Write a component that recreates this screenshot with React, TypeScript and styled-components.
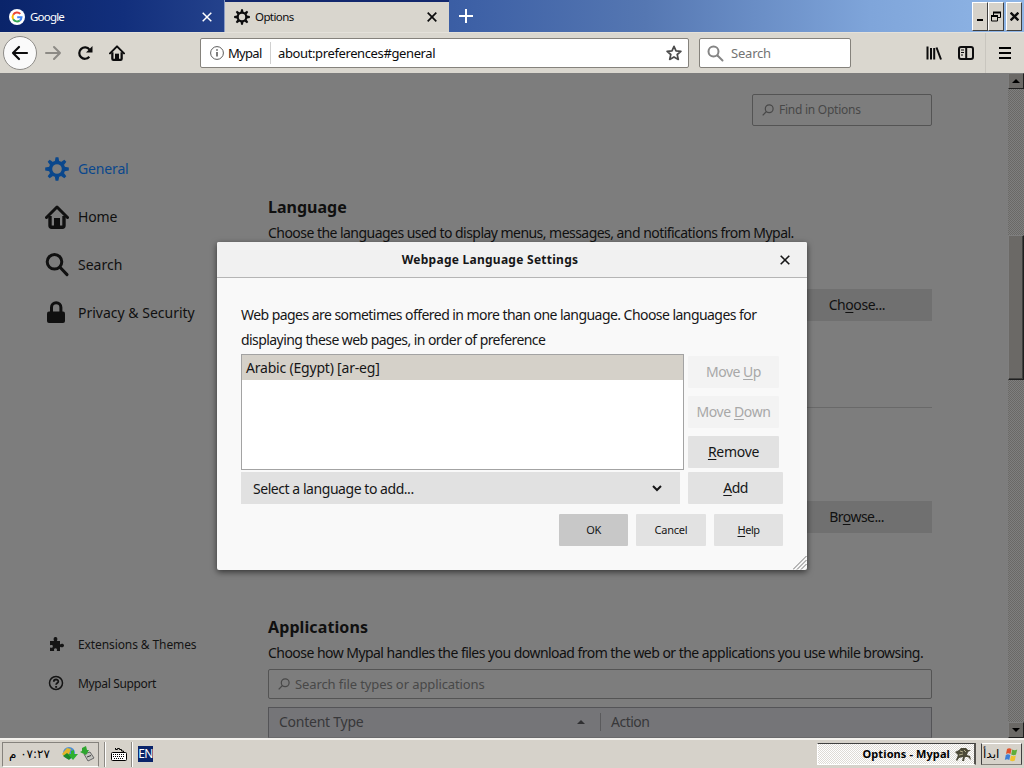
import React from "react";
import styled, { createGlobalStyle } from "styled-components";

const Global = createGlobalStyle`
  * { box-sizing: border-box; }
  html, body { margin: 0; padding: 0; }
  body { width: 1024px; height: 768px; overflow: hidden; background: #7d7d7d;
    font-family: "Noto Sans", "DejaVu Sans", sans-serif; color: #0c0c0d; }
  u { text-decoration-thickness: 1px; text-underline-offset: 2px; }
`;

const Screen = styled.div`
  width: 1024px; height: 768px; display: flex; flex-direction: column; overflow: hidden;
`;

const Text = styled.span<{ $size?: number; $ls?: number; $bold?: boolean; $color?: string }>`
  font-size: ${p => p.$size ?? 14}px;
  letter-spacing: ${p => p.$ls ?? 0}px;
  font-weight: ${p => (p.$bold ? 700 : 400)};
  color: ${p => p.$color ?? "inherit"};
  line-height: 20px;
  white-space: nowrap;
`;

/* ---- tab strip ---- */
const TabStrip = styled.div`
  height: 32px; flex: none; display: flex; align-items: stretch;
  background: linear-gradient(90deg, #0a246a 0%, #122f7c 12%, #24428c 22%, #3c5fa5 45%, #5577b2 63%, #7fa5da 85%, #90b6e6 100%);
`;
const Tab = styled.div<{ $active?: boolean }>`
  width: ${p => (p.$active ? 224 : 225)}px; display: flex; align-items: center;
  padding: ${p => (p.$active ? "0 12px 0 9px" : "2px 12px 0 9px")};
  background: ${p => (p.$active ? "#d9d6ce" : "transparent")};
  color: ${p => (p.$active ? "#0c0c0d" : "#fff")};
  border-top: ${p => (p.$active ? "2px solid #12286e" : "none")};
  border-right: ${p => (p.$active ? "none" : "1px solid #8b9cc4")};
`;
const TabTitle = styled.div`flex: 1; padding-left: 5px; display: flex; align-items: center;`;
const NewTab = styled.div`width: 34px; display: flex; align-items: center; justify-content: center; color: #fff;`;
const WindowButtons = styled.div`margin-left: auto; display: flex; padding: 2px 2px 1px 0;`;
const WinButton = styled.div<{ $gap?: boolean }>`
  width: 16px; height: 29px; margin-left: ${p => (p.$gap ? 2 : 0)}px;
  background: #d6d2ca; border: 1px solid; border-color: #fff #404040 #404040 #fff;
  display: flex; align-items: center; justify-content: center;
`;

/* ---- navigation bar ---- */
const NavBar = styled.div`
  height: 41px; flex: none; display: flex; align-items: center; background: #dad7cf;
  border-top: 1px solid #e4e1da; padding-left: 3px; color: #0c0c0d;
`;
const BackButton = styled.div`
  width: 34px; height: 34px; border-radius: 50%; background: #fafafa; border: 1px solid #8e8c88;
  display: flex; align-items: center; justify-content: center;
`;
const NavIcon = styled.div<{ $w: number }>`
  width: ${p => p.$w}px; display: flex; align-items: center; justify-content: center;
`;
const Field = styled.div<{ $w: number; $ml: number }>`
  width: ${p => p.$w}px; height: 30px; margin-left: ${p => p.$ml}px;
  border: 1px solid #85827c; border-radius: 2px; background: #fff; display: flex; align-items: center;
`;
const Identity = styled.div`
  width: 70px; height: 22px; border-right: 1px solid #d0d0d0; display: flex; align-items: center; padding-left: 9px; gap: 4px;
`;
const Address = styled.div`flex: 1; padding-left: 7px; display: flex;`;
const StarSlot = styled.div`width: 28px; display: flex; justify-content: center;`;
const NavEnd = styled.div`margin-left: auto; display: flex; align-items: center; height: 100%;`;
const MenuSlot = styled.div`
  width: 39px; height: 100%; border-left: 1px solid #c9c6bf; display: flex; align-items: center; justify-content: center;
`;

/* ---- options page ---- */
const Page = styled.div`
  position: relative; height: 665px; flex: none; display: flex; background: #7d7d7d; overflow: hidden; color: #101010;
`;
const Sidebar = styled.div`
  width: 268px; padding: 72px 0 35px 45px; display: flex; flex-direction: column; justify-content: space-between;
`;
const NavGroup = styled.div``;
const Category = styled.div<{ $selected?: boolean }>`
  height: 48px; display: flex; align-items: center; gap: 9px; color: ${p => (p.$selected ? "#0a478c" : "#101010")};
`;
const FooterLink = styled.div`
  height: 39px; display: flex; align-items: center; padding-left: 3px; gap: 13px; color: #141414;
`;
const Main = styled.div`width: 664px; display: flex; flex-direction: column;`;
const DimField = styled.div<{ $w?: number; $h: number }>`
  width: ${p => (p.$w ? p.$w + "px" : "100%")}; height: ${p => p.$h}px; border: 1px solid #545454; border-radius: 2px;
  display: flex; align-items: center; gap: 5px; padding-left: 9px; color: #484848; flex: none;
`;
const FindRow = styled.div`height: 124px; padding-top: 21px; display: flex; justify-content: flex-end;`;
const Line = styled.div<{ $h: number }>`height: ${p => p.$h}px; display: flex; align-items: center; flex: none;`;
const ButtonRow = styled.div<{ $mt: number }>`margin-top: ${p => p.$mt}px; display: flex; justify-content: flex-end;`;
const DimButton = styled.div<{ $pr: number }>`
  width: 150px; height: 32px; background: #707070; display: flex; align-items: center; justify-content: flex-end; padding-right: ${p => p.$pr}px;
`;
const Rule = styled.div`height: 1px; margin-top: 86px; background: #696969;`;
const TableHead = styled.div`
  height: 31px; margin-top: 8px; border: 1px solid #545457; border-bottom-color: #6a6a6c; background: #757578; color: #38383a;
  display: flex; align-items: center; padding: 0 0 2px 10px;
`;
const ColType = styled.div`
  width: 322px; height: 18px; border-right: 1px solid #5a5a5c; display: flex; align-items: center; justify-content: space-between; padding-right: 15px;
`;
const ColAction = styled.div`padding-left: 10px; display: flex;`;
const SortArrow = styled.div`border: 4px solid transparent; border-top: 0; border-bottom: 4px solid #303032;`;

const ScrollBar = styled.div`
  width: 16px; margin-left: auto; display: flex; flex-direction: column;
  background: repeating-conic-gradient(#6a6966 0% 25%, #7f7f7f 0% 50%) 0 0 / 2px 2px;
`;
const ScrollButton = styled.div`
  height: 16px; background: #6b6966; border: 1px solid; border-color: #7f7f7f #202020 #202020 #7f7f7f;
  display: flex; align-items: center; justify-content: center;
`;
const Thumb = styled.div`
  height: 145px; margin-top: 146px; margin-bottom: auto; background: #6b6966;
  border: 1px solid; border-color: #7f7f7f #202020 #202020 #7f7f7f; box-shadow: inset -1px -1px #40403e;
`;

/* ---- dialog ---- */
const Dialog = styled.div`
  position: absolute; left: 217px; top: 169px; width: 590px; height: 328px; background: #f9f9f9;
  border-radius: 2px; box-shadow: 0 2px 6px rgba(0,0,0,.6); color: #161617;
`;
const TitleBar = styled.div`
  height: 36px; background: #f1f1f1; border-bottom: 1px solid #b5b5b5; border-radius: 2px 2px 0 0;
  display: flex; align-items: center; padding-right: 17px;
`;
const Title = styled.div`flex: 1; display: flex; justify-content: center; padding-right: 17px;`;
const Body = styled.div`padding: 24px 24px 0;`;
const Para = styled.div`height: 52px; display: flex; flex-direction: column;`;
const Columns = styled.div`display: flex; gap: 4px; height: 116px;`;
const ListBox = styled.div`width: 443px; border: 1px solid #a3a3a3; background: #fff;`;
const ListItem = styled.div`height: 25px; background: #d5d1c9; padding-left: 4px; display: flex; align-items: center;`;
const Stack = styled.div`display: flex; flex-direction: column; gap: 8px; padding-top: 2px;`;
const AddRow = styled.div`display: flex; gap: 8px; margin-top: 2px;`;
const Button = styled.div<{ $w: number; $kind?: "default" | "disabled" }>`
  width: ${p => p.$w}px; height: 32px; border-radius: 1px; display: flex; align-items: center; justify-content: center;
  background: ${p => (p.$kind === "default" ? "#c8c8c8" : p.$kind === "disabled" ? "#f3f3f3" : "#e2e2e2")};
  color: ${p => (p.$kind === "disabled" ? "#a8a8a8" : "#161617")};
`;
const Select = styled.div`
  width: 439px; height: 32px; background: #e1e1e1; display: flex; align-items: center; justify-content: space-between; padding: 1px 18px 0 12px;
`;
const Actions = styled.div`display: flex; justify-content: flex-end; gap: 8px; margin-top: 10px;`;
const Grip = styled.div`position: absolute; right: 0; bottom: 0; display: flex;`;

/* ---- taskbar ---- */
const TaskBar = styled.div`
  height: 30px; flex: none; background: #d6d2ca; border-top: 2px solid #f4f2ee; display: flex; align-items: center; color: #000;
`;
const Tray = styled.div`
  width: 97px; height: 25px; margin-left: 2px; border: 1px solid; border-color: #85827c #85827c #fff #85827c;
  display: flex; align-items: center; padding-left: 9px; gap: 11px;
`;
const Clock = styled.span`font: 12px/16px "DejaVu Sans", sans-serif; width: 38px; white-space: nowrap; letter-spacing: -0.7px;`;
const TrayIcons = styled.div`display: flex; gap: 1px;`;
const Separator = styled.div`width: 2px; height: 25px; border-left: 1px solid #8d8a84; border-right: 1px solid #fff;`;
const Slot = styled.div<{ $w: number }>`width: ${p => p.$w}px; display: flex; justify-content: center;`;
const Lang = styled.div`
  width: 15px; height: 16px; background: #0a246a; color: #fff; display: flex; align-items: center; justify-content: center;
`;
const TaskButton = styled.div`
  width: 159px; height: 22px; margin-left: auto; border: 1px solid; border-color: #404040 #85827c #fff #fff; border-right: 2px solid #55534f;
  background: repeating-conic-gradient(#fff 0% 25%, #dedbd5 0% 50%) 0 0 / 2px 2px;
  display: flex; align-items: center; justify-content: flex-end; gap: 5px; padding-right: 3px;
`;
const Start = styled.div`
  width: 41px; height: 22px; margin: 0 2px 0 5px; border: 1px solid; border-color: #fff #404040 #85827c #404040;
  display: flex; align-items: center; justify-content: space-between; padding: 0 2px 0 1px;
`;
const StartText = styled.span`font: 12px/16px "DejaVu Sans", sans-serif;`;

/* ---- drawings ---- */
const Cross = ({ s, w = 1.8 }: { s: number; w?: number }) => (
  <svg width={s} height={s} viewBox="0 0 10 10" stroke="currentColor" strokeWidth={w} fill="none"><path d="M.7.7l8.6 8.6M9.3.7L.7 9.3" /></svg>
);
const Gear = ({ s }: { s: number }) => (
  <svg width={s} height={s} viewBox="-12 -12 24 24" fill="none" stroke="currentColor">
    <circle r="6.500" strokeWidth="3.400" />
    {[0, 45, 90, 135, 180, 225, 270, 315].map(a => (
      <path key={a} d="M-2.200-7.400L-1.400-11.800H1.400L2.200-7.400z" fill="currentColor" stroke="none" transform={`rotate(${a})`} />
    ))}
  </svg>
);
const House = ({ s }: { s: number }) => (
  <svg width={s} height={s} viewBox="0 0 24 24" fill="none" stroke="currentColor">
    <path d="M1.500 12.500L12 2l10.500 10.500" strokeWidth="3" strokeLinecap="round" strokeLinejoin="round" />
    <path d="M5 11v9.500q0 1.700 1.700 1.700h10.600q1.700 0 1.700-1.700V11" strokeWidth="3.400" />
    <path d="M9 22v-9h6v9z" fill="currentColor" stroke="none" />
  </svg>
);
const Lens = ({ s, w = 3 }: { s: number; w?: number }) => (
  <svg width={s} height={s} viewBox="0 0 24 24" fill="none" stroke="currentColor" strokeWidth={w} strokeLinecap="round">
    <circle cx="9.500" cy="8.800" r="7.300" /><path d="M15 14.300l7 7.300" />
  </svg>
);
const SmallLens = () => (
  <svg width="12" height="12" viewBox="0 0 12 12" fill="none" stroke="currentColor" strokeWidth="1.200">
    <circle cx="7.200" cy="4.700" r="3.900" /><path d="M4.400 7.500L.7 11.300" />
  </svg>
);
const Lock = () => (
  <svg width="24" height="24" viewBox="0 0 24 24"><path d="M6.500 12V6.500a4.700 4.700 0 0 1 9.400 0V12" fill="none" stroke="currentColor" strokeWidth="3" /><rect x="2" y="10.500" width="18" height="11.500" rx="2" fill="currentColor" /></svg>
);
const Puzzle = () => (
  <svg width="17" height="17" viewBox="0 0 17 17" fill="currentColor">
    <path d="M2 5h4.200C5.200 3.500 5.500 1 7.500 1s2.300 2.500 1.300 4H12v3.400c1.500-1 4-.8 4 1.100s-2.500 2.200-4 1.200V15H8.800c.5-1.800 0-2.800-1.300-2.800S5.600 13.200 6.200 15H2v-3.500c2 .6 2.800.1 2.800-1.100S4 8.800 2 9.300z" />
  </svg>
);
const Help = () => (
  <svg width="17" height="17" viewBox="0 0 17 17" fill="none" stroke="currentColor">
    <circle cx="8" cy="8" r="6.500" strokeWidth="1.500" /><path d="M5.800 6.700c0-3 4.500-2.800 4.500-.3 0 1.600-2.200 1.600-2.200 3.400" strokeWidth="1.800" /><path d="M7.200 11h1.900v1.800H7.200z" fill="currentColor" stroke="none" />
  </svg>
);
const GoogleLogo = () => (
  <svg width="16" height="16" viewBox="0 0 16 16" fill="none" strokeWidth="2">
    <circle cx="8" cy="8" r="8" fill="#fff" />
    <path d="M11.300 4.900A4.500 4.500 0 0 0 4.200 5.700" stroke="#ea4335" /><path d="M4.200 5.700a4.500 4.500 0 0 0 0 4.600" stroke="#fbbc05" />
    <path d="M4.200 10.300a4.500 4.500 0 0 0 6.600 1.200" stroke="#34a853" /><path d="M10.800 11.500A4.500 4.500 0 0 0 12.500 8.200H8.200" stroke="#4285f4" />
  </svg>
);

export default function App() {
  return (
    <Screen>
      <Global />
      <TabStrip>
        <Tab>
          <GoogleLogo />
          <TabTitle><Text $size={11.5} $ls={-0.8}>Google</Text></TabTitle>
          <Cross s={10} w={1.5} />
        </Tab>
        <Tab $active>
          <Gear s={16} />
          <TabTitle><Text $size={11.5} $ls={-0.6}>Options</Text></TabTitle>
          <Cross s={10} w={1.7} />
        </Tab>
        <NewTab>
          <svg width="14" height="14" viewBox="0 0 14 14" stroke="currentColor" strokeWidth="2"><path d="M7 0v14M0 7h14" /></svg>
        </NewTab>
        <WindowButtons>
          <WinButton><svg width="12" height="14" viewBox="0 0 12 14"><path d="M3 9h6v2H3z" /></svg></WinButton>
          <WinButton><svg width="12" height="12" viewBox="0 0 12 12" fill="none" stroke="#000"><path d="M3.500 5V1.500h7v5H8" /><path d="M3 1.500h8" strokeWidth="2" /><path d="M1.500 5h6v5h-6z" /><path d="M1 5h7" strokeWidth="2" /></svg></WinButton>
          <WinButton $gap><Cross s={9} w={2.6} /></WinButton>
        </WindowButtons>
      </TabStrip>

      <NavBar>
        <BackButton>
          <svg width="18" height="16" viewBox="0 0 18 16" fill="none" stroke="currentColor" strokeWidth="2.200" strokeLinecap="round" strokeLinejoin="round"><path d="M16 8H2M8 2L2 8l6 6" /></svg>
        </BackButton>
        <NavIcon $w={32}>
          <svg width="18" height="16" viewBox="0 0 18 16" fill="none" stroke="#8c8a85" strokeWidth="2" strokeLinecap="round" strokeLinejoin="round"><path d="M2 8h14M10 2l6 6-6 6" /></svg>
        </NavIcon>
        <NavIcon $w={32}>
          <svg width="16" height="16" viewBox="0 0 16 16" fill="none" stroke="currentColor" strokeWidth="2.200"><path d="M12.300 11.800A5.700 5.700 0 1 1 12.500 4.600" /><path d="M15.500 1v6.500H9z" fill="currentColor" stroke="none" /></svg>
        </NavIcon>
        <NavIcon $w={32}><House s={16} /></NavIcon>
        <Field $w={489} $ml={67}>
          <Identity>
            <svg width="14" height="14" viewBox="0 0 14 14" fill="none" stroke="#5c5c5c"><circle cx="7" cy="7" r="6.400" /><path d="M7 6v4.500M7 3.300v1.500" strokeWidth="1.600" /></svg>
            <Text $size={13} $ls={-0.7}>Mypal</Text>
          </Identity>
          <Address><Text $size={13} $ls={-0.38}>about:preferences#general</Text></Address>
          <StarSlot>
            <svg width="16" height="16" viewBox="0 0 16 16" fill="none" stroke="#4b4b4b" strokeWidth="1.700" strokeLinejoin="round"><path d="M8 1.300l2 4.500 4.900.5-3.700 3.200 1.100 4.900L8 11.900l-4.300 2.500 1.100-4.900L1.100 6.300l4.900-.5z" /></svg>
          </StarSlot>
        </Field>
        <Field $w={152} $ml={10}>
          <NavIcon $w={31}><svg width="17" height="17" viewBox="0 0 17 17" fill="none" stroke="#858585" strokeWidth="2" strokeLinecap="round"><circle cx="6.500" cy="6.500" r="5" /><path d="M10.500 10.500l5 5" /></svg></NavIcon>
          <Text $size={13} $ls={-0.2} $color="#737373">Search</Text>
        </Field>
        <NavEnd>
          <NavIcon $w={32}>
            <svg width="16" height="15" viewBox="0 0 16 15" fill="none" stroke="currentColor" strokeWidth="2"><path d="M1.500 0.500v13M5 2v11.500M8.200 2v11.500M10.500 1.500l4.500 12" /></svg>
          </NavIcon>
          <NavIcon $w={32}>
            <svg width="16" height="14" viewBox="0 0 16 14" fill="none" stroke="currentColor" strokeWidth="2"><rect x="1" y="1" width="14" height="12" rx="2" /><path d="M8.200 1v12" /><path d="M3 4h3M3 6.500h3M3 9h2" strokeWidth="1" /></svg>
          </NavIcon>
          <Slot $w={3} />
          <MenuSlot>
            <svg width="13" height="12" viewBox="0 0 13 12"><path d="M0 0h12v2H0zM0 5h12v2H0zM0 10h12v2H0z" /></svg>
          </MenuSlot>
        </NavEnd>
      </NavBar>

      <Page>
        <Sidebar>
          <NavGroup>
            <Category $selected><Gear s={24} /><Text $ls={-0.15}>General</Text></Category>
            <Category><House s={24} /><Text $ls={-0.15}>Home</Text></Category>
            <Category><Lens s={24} /><Text>Search</Text></Category>
            <Category><Lock /><Text>Privacy &amp; Security</Text></Category>
          </NavGroup>
          <NavGroup>
            <FooterLink><Puzzle /><Text $size={12} $ls={-0.1}>Extensions &amp; Themes</Text></FooterLink>
            <FooterLink><Help /><Text $size={12} $ls={-0.35}>Mypal Support</Text></FooterLink>
          </NavGroup>
        </Sidebar>
        <Main>
          <FindRow>
            <DimField $w={180} $h={32}><SmallLens /><Text $size={12} $ls={-0.25}>Find in Options</Text></DimField>
          </FindRow>
          <Line $h={20}><Text $size={16} $bold>Language</Text></Line>
          <Line $h={32}><Text $ls={-0.54}>Choose the languages used to display menus, messages, and notifications from Mypal.</Text></Line>
          <ButtonRow $mt={40}><DimButton $pr={47}><Text $ls={-0.45}>Ch<u>o</u>ose...</Text></DimButton></ButtonRow>
          <Rule />
          <ButtonRow $mt={93}><DimButton $pr={48}><Text $ls={-0.55}>Br<u>o</u>wse...</Text></DimButton></ButtonRow>
          <Line $h={84} />
          <Line $h={20}><Text $size={16} $bold $ls={0.1}>Applications</Text></Line>
          <Line $h={32}><Text $ls={-0.54}>Choose how Mypal handles the files you download from the web or the applications you use while browsing.</Text></Line>
          <DimField $h={30}><SmallLens /><Text $size={13} $ls={-0.1}>Search file types or applications</Text></DimField>
          <TableHead>
            <ColType><Text $ls={-0.25}>Content Type</Text><SortArrow /></ColType>
            <ColAction><Text $ls={-0.5}>Action</Text></ColAction>
          </TableHead>
        </Main>
        <ScrollBar>
          <ScrollButton><svg width="8" height="4" viewBox="0 0 8 4"><path d="M0 4l4-4 4 4z" /></svg></ScrollButton>
          <Thumb />
          <ScrollButton><svg width="8" height="4" viewBox="0 0 8 4"><path d="M0 0h8L4 4z" /></svg></ScrollButton>
        </ScrollBar>

        <Dialog>
          <TitleBar><Title><Text $size={12} $bold $ls={0.26}>Webpage Language Settings</Text></Title><Cross s={10} w={1.6} /></TitleBar>
          <Body>
            <Para>
              <Line $h={25}><Text $ls={-0.55}>Web pages are sometimes offered in more than one language. Choose languages for</Text></Line>
              <Line $h={25}><Text $ls={-0.57}>displaying these web pages, in order of preference</Text></Line>
            </Para>
            <Columns>
              <ListBox><ListItem><Text $ls={-0.2}>Arabic (Egypt) [ar-eg]</Text></ListItem></ListBox>
              <Stack>
                <Button $w={91} $kind="disabled"><Text $ls={-0.5}>Move <u>U</u>p</Text></Button>
                <Button $w={91} $kind="disabled"><Text $ls={-0.4}>Move <u>D</u>own</Text></Button>
                <Button $w={91}><Text $ls={-0.3}><u>R</u>emove</Text></Button>
              </Stack>
            </Columns>
            <AddRow>
              <Select>
                <Text $ls={-0.45}>Select a language to add...</Text>
                <svg width="10" height="7" viewBox="0 0 10 7" fill="none" stroke="currentColor" strokeWidth="2"><path d="M1 1l4 4 4-4" /></svg>
              </Select>
              <Button $w={95}><Text $ls={-0.6}><u>A</u>dd</Text></Button>
            </AddRow>
            <Actions>
              <Button $w={69} $kind="default"><Text $size={11} $ls={-0.4}>OK</Text></Button>
              <Button $w={70}><Text $size={11} $ls={-0.2}>Cancel</Text></Button>
              <Button $w={69}><Text $size={11} $ls={-0.5}><u>H</u>elp</Text></Button>
            </Actions>
          </Body>
          <Grip><svg width="14" height="14" viewBox="0 0 14 14" stroke="#777"><path d="M0 13.500L13.500 0M4 13.500L13.500 4M8 13.500L13.500 8" /></svg></Grip>
        </Dialog>
      </Page>

      <TaskBar>
        <Tray>
          <Clock dir="rtl">٠٧:٢٧ م</Clock>
          <TrayIcons>
            <svg width="17" height="16" viewBox="0 0 17 16"><circle cx="8" cy="7" r="6" fill="#4d8fd0" /><path d="M1 8l5-6 4 1-2 5-3 4z" fill="#e3b52c" /><path d="M2 10l6 4 3-3-5-4z" fill="#1d8a2a" /><path d="M7 8h3V5l3-1v4h4l-5 6z" fill="#2fb12f" /></svg>
            <svg width="16" height="16" viewBox="0 0 16 16"><path d="M5 8l6-2 4 6-6 3z" fill="#c4c4bf" stroke="#666" /><path d="M8 11l4-1.500" stroke="#3a3a3a" /><path d="M1 6l2-1V2l4-2 1 4 2 0-3 5z" fill="#2fa52f" /></svg>
          </TrayIcons>
        </Tray>
        <Slot $w={5} /><Separator />
        <Slot $w={25}>
          <svg width="16" height="15" viewBox="0 0 16 15" fill="none" stroke="#000"><path d="M4.500 1v1.500h2V1.500h2v1h2v1.500h2V5" /><rect x=".5" y="5.500" width="15" height="8" rx="1" fill="#fff" /><path d="M2 7.500h12M2 9.500h12M3 11.500h10" strokeDasharray="1 1" /></svg>
        </Slot>
        <Separator />
        <Slot $w={5} />
        <Lang><Text $size={12} $ls={-0.6}>EN</Text></Lang>
        <TaskButton>
          <Text $size={11} $bold $ls={0.1}>Options - Mypal</Text>
          <svg width="16" height="15" viewBox="0 0 16 15"><path d="M0 5l4-2 2-2h5l2 2h3l-3 2-1 3 3 1 1 4-3-3-3 0-1 4H7l1-4-4 1-2 3-1-1 2-5z" fill="#4c4a38" /><path d="M5 4l3 1M9 3l2 2M4 8l4-1" stroke="#b6b08c" /></svg>
        </TaskButton>
        <Start>
          <StartText dir="rtl">ابدأ</StartText>
          <svg width="15" height="15" viewBox="0 0 15 15"><path d="M3 2q2-1.500 4.500 0L6.500 7Q4 5.500 2 7z" fill="#e0512b" /><path d="M8.200 2.500q2.500 1.500 5 0L12 7.500q-2 1.500-4.800 0z" fill="#5fae3a" /><path d="M1.800 8q2-1.500 4.500 0L5.300 13Q3 11.500.8 13z" fill="#3e7fd6" /><path d="M7 8.500q2.500 1.500 4.800 0l-1 5q-2.500 1.500-4.800 0z" fill="#f0c42e" /></svg>
        </Start>
      </TaskBar>
    </Screen>
  );
}
